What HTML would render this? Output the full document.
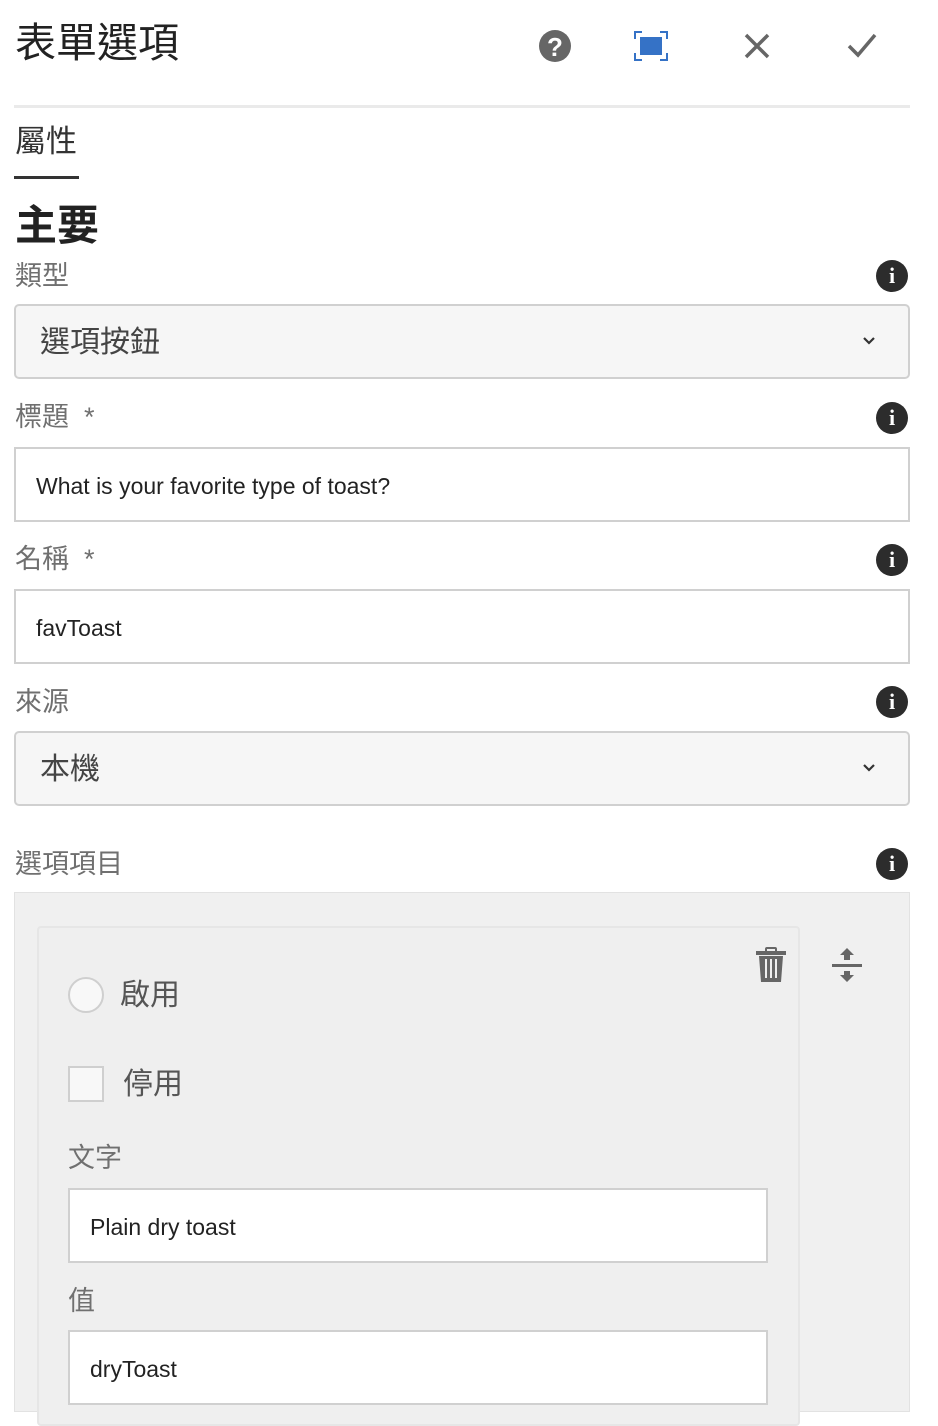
<!DOCTYPE html>
<html><head><meta charset="utf-8"><style>
*{box-sizing:border-box;margin:0;padding:0}
body{width:938px;height:1406px;overflow:hidden;background:#fff;font-family:"Liberation Sans","Noto Sans CJK TC",sans-serif;position:relative;color:#333}
.a{position:absolute}
.lbl{position:absolute;left:15px;font-size:27px;color:#707070;line-height:30px}
.info{position:absolute;left:876px;width:32px;height:32px;border-radius:50%;background:#2c2c2c;color:#fff;font:bold 22px/32px "Liberation Serif",serif;text-align:center}
.sel{position:absolute;left:14px;width:896px;height:75px;border:2px solid #d0d0d0;border-radius:5px;background:#f6f6f6;font-size:30px;line-height:74px;padding-left:24px;color:#444}
.sel svg{position:absolute;right:32px;top:30px}
.inp{position:absolute;border:2px solid #d0d0d0;background:#fff;font-size:23px;line-height:75px;padding-left:20px;color:#222;height:75px}
</style></head><body>
<div class="a" style="left:15px;top:18px;font-size:41px;line-height:50px;color:#222">表單選項</div>
<svg class="a" style="left:538px;top:29px" width="34" height="34" viewBox="0 0 34 34"><circle cx="17" cy="17" r="16" fill="#666"/><text x="17" y="27" text-anchor="middle" font-family="Liberation Sans" font-weight="bold" font-size="26" fill="#fff">?</text></svg>
<svg class="a" style="left:634px;top:31px" width="34" height="30" viewBox="0 0 34 30"><path d="M1 8V1H8M26 1H33V8M33 22V29H26M8 29H1V22" stroke="#3572c6" stroke-width="2" fill="none"/><rect x="6" y="6" width="22" height="18" fill="#3572c6"/></svg>
<svg class="a" style="left:743px;top:32px" width="28" height="28" viewBox="0 0 28 28"><path d="M3 3L25 25M25 3L3 25" stroke="#666" stroke-width="3.5"/></svg>
<svg class="a" style="left:847px;top:32px" width="30" height="26" viewBox="0 0 30 26"><path d="M2 14L11 23L28 3" stroke="#666" stroke-width="3.5" fill="none"/></svg>
<div class="a" style="left:14px;top:105px;width:896px;height:3px;background:#eaeaea"></div>
<div class="a" style="left:15px;top:123px;font-size:31px;line-height:38px;color:#333">屬性</div>
<div class="a" style="left:14px;top:176px;width:65px;height:3px;background:#333"></div>
<div class="a" style="left:15px;top:202px;font-size:42px;font-weight:bold;line-height:48px;color:#222">主要</div>

<div class="lbl" style="top:261px">類型</div><div class="info" style="top:260px">i</div>
<div class="sel" style="top:304px">選項按鈕<svg width="14" height="10" viewBox="0 0 14 10"><path d="M2 2L7 7L12 2" stroke="#333" stroke-width="2.2" fill="none"/></svg></div>

<div class="lbl" style="top:402px">標題 &nbsp;*</div><div class="info" style="top:402px">i</div>
<div class="inp" style="left:14px;top:447px;width:896px">What is your favorite type of toast?</div>

<div class="lbl" style="top:544px">名稱 &nbsp;*</div><div class="info" style="top:544px">i</div>
<div class="inp" style="left:14px;top:589px;width:896px">favToast</div>

<div class="lbl" style="top:687px">來源</div><div class="info" style="top:686px">i</div>
<div class="sel" style="top:731px">本機<svg width="14" height="10" viewBox="0 0 14 10"><path d="M2 2L7 7L12 2" stroke="#333" stroke-width="2.2" fill="none"/></svg></div>

<div class="lbl" style="top:849px">選項項目</div><div class="info" style="top:848px">i</div>
<div class="a" style="left:14px;top:892px;width:896px;height:520px;background:#f0f0f0;border:1px solid #e2e2e2"></div>
<div class="a" style="left:37px;top:926px;width:763px;height:500px;background:#efefef;border:2px solid #e6e6e6;border-radius:4px"></div>
<svg class="a" style="left:755px;top:946px" width="32" height="38" viewBox="0 0 32 38"><rect x="11" y="2" width="10" height="4" rx="1" fill="none" stroke="#666" stroke-width="2"/><rect x="1" y="5" width="30" height="4" fill="#666"/><path d="M4 10H28L26 36H6Z" fill="#666"/><path d="M11 13V32M16 13V32M21 13V32" stroke="#efefef" stroke-width="2"/></svg>
<svg class="a" style="left:831px;top:946px" width="32" height="38" viewBox="0 0 32 38"><path d="M16 2L9 9H13V14H19V9H23Z" fill="#666"/><rect x="1" y="18" width="30" height="3" fill="#666"/><path d="M16 36L9 29H13V25H19V29H23Z" fill="#666"/></svg>
<div class="a" style="left:68px;top:977px;width:36px;height:36px;border-radius:50%;border:2px solid #cfcfcf;background:#f8f8f8"></div>
<div class="a" style="left:120px;top:976px;font-size:30px;line-height:40px;color:#555">啟用</div>
<div class="a" style="left:68px;top:1066px;width:36px;height:36px;border:2px solid #cfcfcf;background:#f8f8f8"></div>
<div class="a" style="left:123px;top:1065px;font-size:30px;line-height:40px;color:#555">停用</div>
<div class="lbl" style="left:68px;top:1143px">文字</div>
<div class="inp" style="left:68px;top:1188px;width:700px">Plain dry toast</div>
<div class="lbl" style="left:68px;top:1286px">值</div>
<div class="inp" style="left:68px;top:1330px;width:700px">dryToast</div>
</body></html>
